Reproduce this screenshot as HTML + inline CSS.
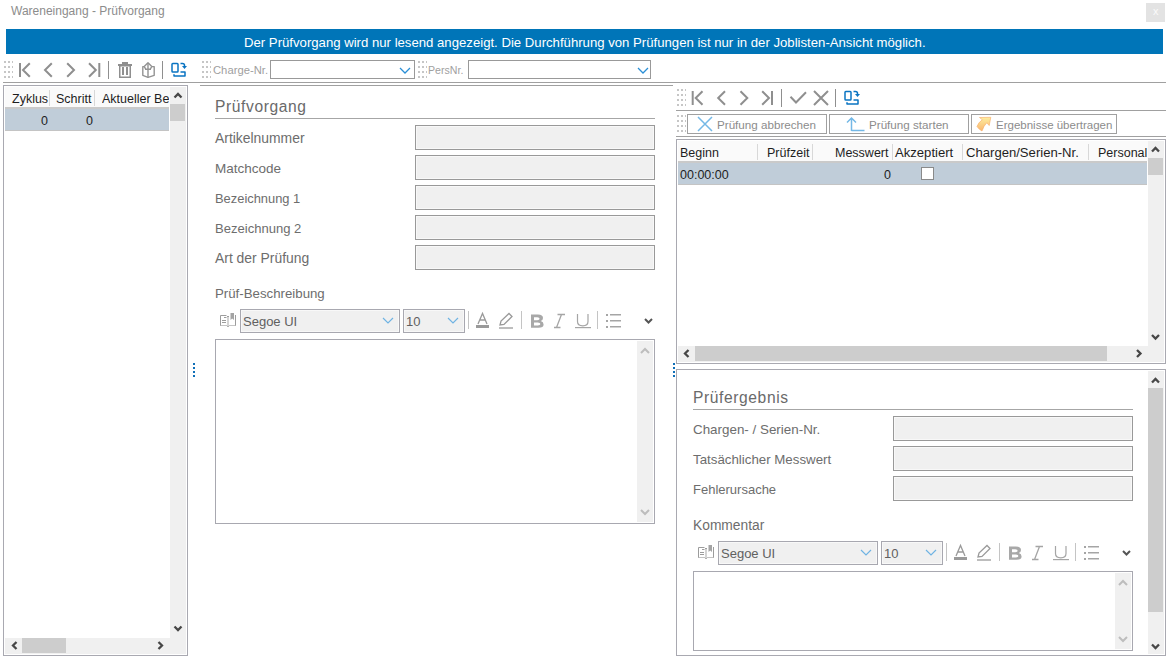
<!DOCTYPE html>
<html><head><meta charset="utf-8">
<style>
html,body{margin:0;padding:0}
body{width:1172px;height:660px;overflow:hidden;background:#fff;position:relative;font-family:"Liberation Sans",sans-serif}
.a{position:absolute}
.t{position:absolute;white-space:nowrap;line-height:1}
.hl{position:absolute;height:1px;background:#a0a0a0}
.vl{position:absolute;width:1px;background:#a0a0a0}
.box{position:absolute;box-sizing:border-box;border:1px solid #a0a0a0}
.tb{position:absolute;box-sizing:border-box;border:1px solid #999;background:#f0f0f0;box-shadow:inset 0 0 0 1px #f8f8f8}
.lbl{color:#6d6d6d;font-size:13.3px}
.hdr{color:#1e1e1e;font-size:12.5px}
svg{position:absolute;overflow:visible}
.grip{background-image:linear-gradient(90deg,transparent 2px,#fff 2px),linear-gradient(transparent 2px,#fff 2px);background-color:#c6c6c6;background-size:4px 5px}
</style></head><body>

<!-- window title -->
<div class="t" style="left:11px;top:5px;font-size:12px;color:#8c8c8c">Wareneingang - Prüfvorgang</div>
<div class="a" style="left:1146px;top:3px;width:19px;height:19px;background:#e3e3e3"></div>
<div class="t" style="left:1153px;top:6px;font-size:11px;color:#fafafa">x</div>

<!-- banner -->
<div class="a" style="left:6px;top:29px;width:1157px;height:25px;background:#0075b8"></div>
<div class="t" style="left:244px;top:36px;font-size:13.17px;color:#fff">Der Prüfvorgang wird nur lesend angezeigt. Die Durchführung von Prüfungen ist nur in der Joblisten-Ansicht möglich.</div>

<!-- top toolbar -->
<div class="hl" style="left:3px;top:82px;width:1163px"></div>

<!-- grippers -->
<svg style="left:0;top:0" width="1" height="1">
 <defs><pattern id="grip" width="4" height="4" patternUnits="userSpaceOnUse"><rect x="0" y="0" width="2" height="2" fill="#c4c4c4"/></pattern></defs>
</svg>
<div class="a grip" style="left:4px;top:61px;width:9px;height:17px"></div>
<!-- nav icons -->
<svg style="left:0;top:0" width="1172" height="100">
 <g fill="none" stroke="#8f8f8f" stroke-width="2">
  <path d="M20 63V77M29.8 63.2L23 70L29.8 76.8"/>
  <path d="M51.8 63.2L45 70L51.8 76.8"/>
  <path d="M67.2 63.2L74 70L67.2 76.8"/>
  <path d="M89 63.2L95.8 70L89 76.8M99.3 63V77"/>
 </g>
 <rect x="108" y="61" width="1" height="18" fill="#8f8f8f"/>
 <!-- trash -->
 <g fill="#8f8f8f">
  <rect x="122" y="62" width="6" height="2"/>
  <rect x="118" y="64" width="14" height="2"/>
  <path d="M119 66h12v12h-12zM120.5 66.5v10h9v-10z" fill-rule="evenodd"/>
  <rect x="122" y="67" width="2" height="8"/>
  <rect x="126" y="67" width="2" height="8"/>
 </g>
 <!-- cube -->
 <g fill="none" stroke="#939393" stroke-width="1.4" stroke-linejoin="round">
  <path d="M148 62.8L144.2 66.6H142.8V75.3L148 77.3L154.2 75.3V66.6H151.8Z"/>
  <path d="M148 63V77.5M145 69.2H151M144.4 66.8L145.6 68.8M151.6 66.8L150.4 68.8"/>
 </g>
 <rect x="162" y="61" width="1" height="18" fill="#8f8f8f"/>
 <!-- blue export -->
 <g fill="none" stroke="#0a74c2" stroke-width="1.5" stroke-linejoin="round">
  <rect x="172" y="63.5" width="6" height="8.5" rx="0.8"/>
  <path d="M174 74.2V76H185V72H180.5"/>
  <path d="M180.5 63.5H182.5Q184.5 63.5 184.5 65.5V66.5"/>
 </g>
 <path d="M182 66H187L184.5 69Z" fill="#0a74c2"/>
</svg>
<!-- charge / pers -->
<div class="a grip" style="left:202px;top:61px;width:9px;height:17px"></div>
<div class="t" style="left:213px;top:65px;font-size:11.25px;color:#a0a0a0">Charge-Nr.</div>
<div class="box" style="left:270px;top:60px;width:145px;height:19px;border-color:#999"></div>
<div class="a grip" style="left:418px;top:61px;width:9px;height:17px"></div>
<div class="t" style="left:428px;top:65px;font-size:10.6px;color:#a0a0a0">PersNr.</div>
<div class="box" style="left:468px;top:60px;width:183px;height:19px;border-color:#999"></div>
<svg style="left:0;top:0" width="1172" height="100">
 <g fill="none" stroke="#2a8fd6" stroke-width="1.3">
  <path d="M400 68L405 73L410 68"/>
  <path d="M638 68L643 73L648 68"/>
 </g>
</svg>



<!-- left grid -->
<div class="box" style="left:3px;top:85px;width:185px;height:571px;border-color:#a9a9b1"></div>
<div class="a" style="left:5px;top:87px;width:165px;height:20px;background:#fafafa"></div>
<div class="t hdr" style="left:12px;top:93px">Zyklus</div>
<div class="vl" style="left:49px;top:90px;height:16px;background:#d8d8d8"></div>
<div class="t hdr" style="left:56px;top:93px">Schritt</div>
<div class="vl" style="left:94px;top:90px;height:16px;background:#d8d8d8"></div>
<div class="a" style="left:102px;top:87px;width:67px;height:20px;overflow:hidden"><div class="t hdr" style="left:0;top:6px">Aktueller Bearbeiter</div></div>
<div class="a" style="left:5px;top:107px;width:164px;height:24px;background:#c0cdd9;border-top:2px solid #cacaca;border-bottom:1px solid #c4c4c4;box-sizing:border-box"></div>
<div class="t hdr" style="left:41px;top:115px">0</div>
<div class="t hdr" style="left:86px;top:115px">0</div>
<!-- v scroll -->
<div class="a" style="left:170px;top:87px;width:16px;height:567px;background:#f0f0f0"></div>
<div class="a" style="left:170px;top:104px;width:15px;height:17px;background:#cdcdcd"></div>
<!-- h scroll -->
<div class="a" style="left:5px;top:638px;width:181px;height:16px;background:#f0f0f0"></div>
<div class="a" style="left:22px;top:638px;width:44px;height:15px;background:#cdcdcd"></div>
<svg style="left:0;top:0" width="200" height="660">
 <g fill="none" stroke="#474747" stroke-width="2.3">
  <path d="M174.5 97.5L178 94L181.5 97.5"/>
  <path d="M174.5 626.5L178 630L181.5 626.5"/>
  <path d="M16.5 642L13 645.5L16.5 649"/>
  <path d="M158.5 642L162 645.5L158.5 649"/>
 </g>
</svg>
<div class="a" style="left:193px;top:363px;width:2px;height:2px;background:#0f6fb8;box-shadow:0 4px 0 #0f6fb8,0 8px 0 #0f6fb8,0 12px 0 #0f6fb8"></div>


<!-- middle panel -->
<!--MID-->
<div class="t" style="left:215px;top:99px;font-size:15.6px;letter-spacing:0.6px;color:#6a6a6a">Prüfvorgang</div>
<div class="hl" style="left:215px;top:118px;width:440px;background:#a6a6a6"></div>
<div class="t lbl" style="left:215px;top:132px;font-size:13.9px">Artikelnummer</div>
<div class="tb" style="left:415px;top:125px;width:240px;height:25px"></div>
<div class="t lbl" style="left:215px;top:162px;font-size:13.5px">Matchcode</div>
<div class="tb" style="left:415px;top:155px;width:240px;height:25px"></div>
<div class="t lbl" style="left:215px;top:193px;font-size:12.9px">Bezeichnung 1</div>
<div class="tb" style="left:415px;top:185px;width:240px;height:25px"></div>
<div class="t lbl" style="left:215px;top:222px;font-size:13.05px">Bezeichnung 2</div>
<div class="tb" style="left:415px;top:215px;width:240px;height:25px"></div>
<div class="t lbl" style="left:215px;top:252px;font-size:13.9px">Art der Prüfung</div>
<div class="tb" style="left:415px;top:245px;width:240px;height:25px"></div>
<div class="t lbl" style="left:215px;top:287px;font-size:13.25px">Prüf-Beschreibung</div>
<svg style="left:0px;top:0px" width="700" height="400"><g fill="none" stroke-width="1"><path d="M220.5 326V315.5H226.5M235.5 315V326" stroke="#9c9c9c"/><path d="M220.5 325.5H235.5" stroke="#c4c4c4"/></g><g fill="#9c9c9c"><rect x="227" y="316" width="2" height="10" fill="#d4d4d4"/><rect x="227" y="316" width="2" height="1"/><rect x="224" y="317" width="2.5" height="1"/><rect x="222" y="320" width="4" height="1"/><rect x="222" y="322" width="4" height="1"/><path d="M230.5 313H234V320L232.2 318.5L230.5 320Z" fill="#a4a4a4"/><rect x="227" y="326" width="2" height="1" fill="#b0b0b0"/></g></svg>
<div class="tb" style="left:240px;top:309px;width:160px;height:24px;border-color:#a8a8b0"></div>
<div class="t" style="left:243px;top:315px;font-size:13px;color:#606060">Segoe UI</div>
<div class="tb" style="left:403px;top:309px;width:62px;height:24px;border-color:#a8a8b0"></div>
<div class="t" style="left:406px;top:315px;font-size:13px;color:#606060">10</div>
<svg style="left:0px;top:0px" width="700" height="400"><g fill="none" stroke="#6fb3e3" stroke-width="1.2"><path d="M383 318L388 323L393 318"/><path d="M448 318L453 323L458 318"/></g><g fill="#c4c4c4"><rect x="468" y="311" width="1" height="18"/><rect x="521" y="311" width="1" height="18"/><rect x="597" y="311" width="1" height="18"/></g><g fill="none" stroke="#9a9a9a" stroke-width="1.3"><path d="M478 324L482.5 313.5L487 324M479.8 320H485.2"/></g><rect x="476" y="325" width="13" height="3" fill="#9a9a9a"/><g fill="none" stroke="#9a9a9a" stroke-width="1.3"><path d="M500 325L501 321L509 313.5L512 316.5L504 324.5Z"/><path d="M499 328H513"/></g><path fill-rule="evenodd" fill="#a8a8a8" d="M531 314.5H538Q543 314.5 543 318Q543 320.3 540.8 321Q543.6 321.8 543.6 324.4Q543.6 327.7 538.5 327.7H531ZM534 317.2H537.3Q539.6 317.2 539.6 318.8Q539.6 320.2 537.3 320.2H534ZM534 322.6H537.8Q540.4 322.6 540.4 324.1Q540.4 325.4 537.8 325.4H534Z"/><g fill="none" stroke="#a5a5a5" stroke-width="1.3"><path d="M556.5 327.5L561.5 314.5M557.5 314.5H565M554 327.5H560.5"/></g><g fill="none" stroke="#a5a5a5" stroke-width="1.2"><path d="M577.5 314V321.5Q577.5 325.8 582.8 325.8Q588 325.8 588 321.5V314"/><path d="M575 327.6H591"/></g><g fill="#a5a5a5"><rect x="606" y="314" width="2" height="2"/><rect x="606" y="320" width="2" height="2"/><rect x="606" y="326" width="2" height="2"/><rect x="610" y="314" width="11" height="1.5"/><rect x="610" y="320" width="11" height="1.5"/><rect x="610" y="326" width="11" height="1.5"/></g><g fill="none" stroke="#555" stroke-width="2"><path d="M645 319L648.5 322.5L652 319"/></g></svg>
<div class="box" style="left:215px;top:339px;width:440px;height:185px;border-color:#a8a8b0"></div>
<div class="a" style="left:637px;top:341px;width:16px;height:181px;background:#f0f0f0"></div>
<svg style="left:0px;top:0px" width="700" height="600"><g fill="none" stroke="#bdbdbd" stroke-width="2"><path d="M641 353L645 349L649 353"/><path d="M641 510L645 514L649 510"/></g></svg>
<!--/MID-->
<div class="hl" style="left:200px;top:85px;width:473px"></div>


<!-- right side -->
<div class="a grip" style="left:677px;top:89px;width:9px;height:17px"></div>
<svg style="left:0;top:0" width="1172" height="140">
 <g fill="none" stroke="#8f8f8f" stroke-width="2">
  <path d="M692.7 91V105M702.5 91.2L695.7 98L702.5 104.8"/>
  <path d="M725 91.2L718.2 98L725 104.8"/>
  <path d="M740.5 91.2L747.3 98L740.5 104.8"/>
  <path d="M762.2 91.2L769 98L762.2 104.8M772 91V105"/>
  <path d="M790.5 96.8L796 102.5L806 92.3"/>
  <path d="M814 91L828 105M828 91L814 105"/>
 </g>
 <rect x="781" y="89" width="1" height="18" fill="#8f8f8f"/>
 <rect x="835" y="89" width="1" height="18" fill="#8f8f8f"/>
 <g transform="translate(673,28)">
 <g fill="none" stroke="#0a74c2" stroke-width="1.5" stroke-linejoin="round">
  <rect x="172" y="63.5" width="6" height="8.5" rx="0.8"/>
  <path d="M174 74.2V76H185V72H180.5"/>
  <path d="M180.5 63.5H182.5Q184.5 63.5 184.5 65.5V66.5"/>
 </g>
 <path d="M182 66H187L184.5 69Z" fill="#0a74c2"/>
 </g>
</svg>
<div class="hl" style="left:676px;top:110px;width:490px"></div>
<div class="a grip" style="left:677px;top:115px;width:9px;height:17px"></div>
<div class="box" style="left:687px;top:114px;width:140px;height:20px;border-color:#a0a0a0"></div>
<div class="t" style="left:717px;top:119px;font-size:11.65px;color:#8c8c8c">Prüfung abbrechen</div>
<div class="box" style="left:829px;top:114px;width:140px;height:20px;border-color:#a0a0a0"></div>
<div class="t" style="left:869px;top:119px;font-size:11.65px;color:#8c8c8c">Prüfung starten</div>
<div class="box" style="left:971px;top:114px;width:146px;height:20px;border-color:#a0a0a0"></div>
<div class="t" style="left:996px;top:120px;font-size:11.5px;color:#8c8c8c">Ergebnisse übertragen</div>
<svg style="left:0;top:0" width="1172" height="140">
 <g fill="none" stroke="#74b8e6" stroke-width="1.5">
  <path d="M698 117L712 131M712 117L698 131"/>
  <path d="M851.5 131V118M847 122.5L851.5 118L856 122.5M851.5 130.5H864.5"/>
 </g>
 <defs><linearGradient id="og" x1="0" y1="0" x2="0" y2="1"><stop offset="0" stop-color="#fdeea0"/><stop offset="1" stop-color="#f9b56e"/></linearGradient></defs>
 <path d="M979.5 117.5L990.8 117.3L989.2 125.5L986.8 122.8Q983.8 125.5 982 131Q979 129.5 977 126.5Q978.8 122 982.3 119.8Z" fill="url(#og)" stroke="#f7a860" stroke-width="0.6"/>
</svg>
<div class="hl" style="left:676px;top:136px;width:490px"></div>

<!-- right grid -->
<div class="box" style="left:676px;top:139px;width:490px;height:225px;border-color:#a9a9b1"></div>
<div class="a" style="left:678px;top:141px;width:470px;height:20px;background:#fafafa"></div>
<div class="t hdr" style="left:680px;top:147px">Beginn</div>
<div class="vl" style="left:757px;top:144px;height:16px;background:#d8d8d8"></div>
<div class="t hdr" style="left:767px;top:147px">Prüfzeit</div>
<div class="vl" style="left:812px;top:144px;height:16px;background:#d8d8d8"></div>
<div class="t hdr" style="left:835px;top:147px">Messwert</div>
<div class="vl" style="left:892px;top:144px;height:16px;background:#d8d8d8"></div>
<div class="t hdr" style="left:895px;top:146px;font-size:13.1px">Akzeptiert</div>
<div class="vl" style="left:962px;top:144px;height:16px;background:#d8d8d8"></div>
<div class="t hdr" style="left:966px;top:146px;font-size:13.1px">Chargen/Serien-Nr.</div>
<div class="vl" style="left:1088px;top:144px;height:16px;background:#d8d8d8"></div>
<div class="a" style="left:1098px;top:141px;width:49px;height:20px;overflow:hidden"><div class="t hdr" style="left:0;top:6px">Personal</div></div>
<div class="a" style="left:678px;top:161px;width:469px;height:24px;background:#c0cdd9;border-top:2px solid #cacaca;border-bottom:1px solid #c4c4c4;box-sizing:border-box"></div>
<div class="t hdr" style="left:680px;top:169px">00:00:00</div>
<div class="t hdr" style="left:884px;top:169px">0</div>
<div class="a" style="left:921px;top:167px;width:13px;height:13px;box-sizing:border-box;border:1px solid #8a8a8a;background:#fff"></div>
<div class="a" style="left:1148px;top:141px;width:16px;height:221px;background:#f0f0f0"></div>
<div class="a" style="left:1148px;top:158px;width:15px;height:17px;background:#cdcdcd"></div>
<div class="a" style="left:678px;top:346px;width:470px;height:16px;background:#f0f0f0"></div>
<div class="a" style="left:695px;top:346px;width:412px;height:15px;background:#cdcdcd"></div>
<svg style="left:0;top:0" width="1172" height="660">
 <g fill="none" stroke="#474747" stroke-width="2.3">
  <path d="M1152 151.5L1155.5 148L1159 151.5"/>
  <path d="M1152 335L1155.5 338.5L1159 335"/>
  <path d="M688.5 350L685 353.5L688.5 357"/>
  <path d="M1137 350L1140.5 353.5L1137 357"/>
 </g>
</svg>
<div class="a" style="left:673px;top:363px;width:2px;height:2px;background:#0f6fb8;box-shadow:0 4px 0 #0f6fb8,0 8px 0 #0f6fb8,0 12px 0 #0f6fb8"></div>

<!-- right lower panel -->
<div class="box" style="left:676px;top:369px;width:490px;height:287px;border-color:#a9a9b1"></div>
<div class="a" style="left:1148px;top:371px;width:16px;height:283px;background:#f0f0f0"></div>
<div class="a" style="left:1148px;top:388px;width:15px;height:224px;background:#cdcdcd"></div>
<svg style="left:0;top:0" width="1172" height="660"><g fill="none" stroke="#474747" stroke-width="2.3">
  <path d="M1152 382.5L1155.5 379L1159 382.5"/>
  <path d="M1152 644.5L1155.5 648L1159 644.5"/>
</g></svg>
<!--LOW-->
<div class="t" style="left:693px;top:390px;font-size:15.6px;letter-spacing:0.6px;color:#6a6a6a">Prüfergebnis</div>
<div class="hl" style="left:693px;top:409px;width:440px;background:#a6a6a6"></div>
<div class="t lbl" style="left:693px;top:423px;font-size:13.4px">Chargen- / Serien-Nr.</div>
<div class="tb" style="left:893px;top:416px;width:240px;height:25px"></div>
<div class="t lbl" style="left:693px;top:453px;font-size:13.3px">Tatsächlicher Messwert</div>
<div class="tb" style="left:893px;top:446px;width:240px;height:25px"></div>
<div class="t lbl" style="left:693px;top:483px;font-size:13.0px">Fehlerursache</div>
<div class="tb" style="left:893px;top:476px;width:240px;height:25px"></div>
<div class="t lbl" style="left:693px;top:519px;font-size:13.8px">Kommentar</div>
<svg style="left:478px;top:232px" width="700" height="400"><g fill="none" stroke-width="1"><path d="M220.5 326V315.5H226.5M235.5 315V326" stroke="#9c9c9c"/><path d="M220.5 325.5H235.5" stroke="#c4c4c4"/></g><g fill="#9c9c9c"><rect x="227" y="316" width="2" height="10" fill="#d4d4d4"/><rect x="227" y="316" width="2" height="1"/><rect x="224" y="317" width="2.5" height="1"/><rect x="222" y="320" width="4" height="1"/><rect x="222" y="322" width="4" height="1"/><path d="M230.5 313H234V320L232.2 318.5L230.5 320Z" fill="#a4a4a4"/><rect x="227" y="326" width="2" height="1" fill="#b0b0b0"/></g></svg>
<div class="tb" style="left:718px;top:541px;width:160px;height:24px;border-color:#a8a8b0"></div>
<div class="t" style="left:721px;top:547px;font-size:13px;color:#606060">Segoe UI</div>
<div class="tb" style="left:881px;top:541px;width:62px;height:24px;border-color:#a8a8b0"></div>
<div class="t" style="left:884px;top:547px;font-size:13px;color:#606060">10</div>
<svg style="left:478px;top:232px" width="700" height="400"><g fill="none" stroke="#6fb3e3" stroke-width="1.2"><path d="M383 318L388 323L393 318"/><path d="M448 318L453 323L458 318"/></g><g fill="#c4c4c4"><rect x="468" y="311" width="1" height="18"/><rect x="521" y="311" width="1" height="18"/><rect x="597" y="311" width="1" height="18"/></g><g fill="none" stroke="#9a9a9a" stroke-width="1.3"><path d="M478 324L482.5 313.5L487 324M479.8 320H485.2"/></g><rect x="476" y="325" width="13" height="3" fill="#9a9a9a"/><g fill="none" stroke="#9a9a9a" stroke-width="1.3"><path d="M500 325L501 321L509 313.5L512 316.5L504 324.5Z"/><path d="M499 328H513"/></g><path fill-rule="evenodd" fill="#a8a8a8" d="M531 314.5H538Q543 314.5 543 318Q543 320.3 540.8 321Q543.6 321.8 543.6 324.4Q543.6 327.7 538.5 327.7H531ZM534 317.2H537.3Q539.6 317.2 539.6 318.8Q539.6 320.2 537.3 320.2H534ZM534 322.6H537.8Q540.4 322.6 540.4 324.1Q540.4 325.4 537.8 325.4H534Z"/><g fill="none" stroke="#a5a5a5" stroke-width="1.3"><path d="M556.5 327.5L561.5 314.5M557.5 314.5H565M554 327.5H560.5"/></g><g fill="none" stroke="#a5a5a5" stroke-width="1.2"><path d="M577.5 314V321.5Q577.5 325.8 582.8 325.8Q588 325.8 588 321.5V314"/><path d="M575 327.6H591"/></g><g fill="#a5a5a5"><rect x="606" y="314" width="2" height="2"/><rect x="606" y="320" width="2" height="2"/><rect x="606" y="326" width="2" height="2"/><rect x="610" y="314" width="11" height="1.5"/><rect x="610" y="320" width="11" height="1.5"/><rect x="610" y="326" width="11" height="1.5"/></g><g fill="none" stroke="#555" stroke-width="2"><path d="M645 319L648.5 322.5L652 319"/></g></svg>
<div class="box" style="left:693px;top:571px;width:440px;height:80px;border-color:#a8a8b0"></div>
<div class="a" style="left:1115px;top:573px;width:16px;height:76px;background:#f0f0f0"></div>
<svg style="left:478px;top:232px" width="700" height="600"><g fill="none" stroke="#bdbdbd" stroke-width="2"><path d="M641 353L645 349L649 353"/><path d="M641 405L645 409L649 405"/></g></svg>
<!--/LOW-->
</body></html>
